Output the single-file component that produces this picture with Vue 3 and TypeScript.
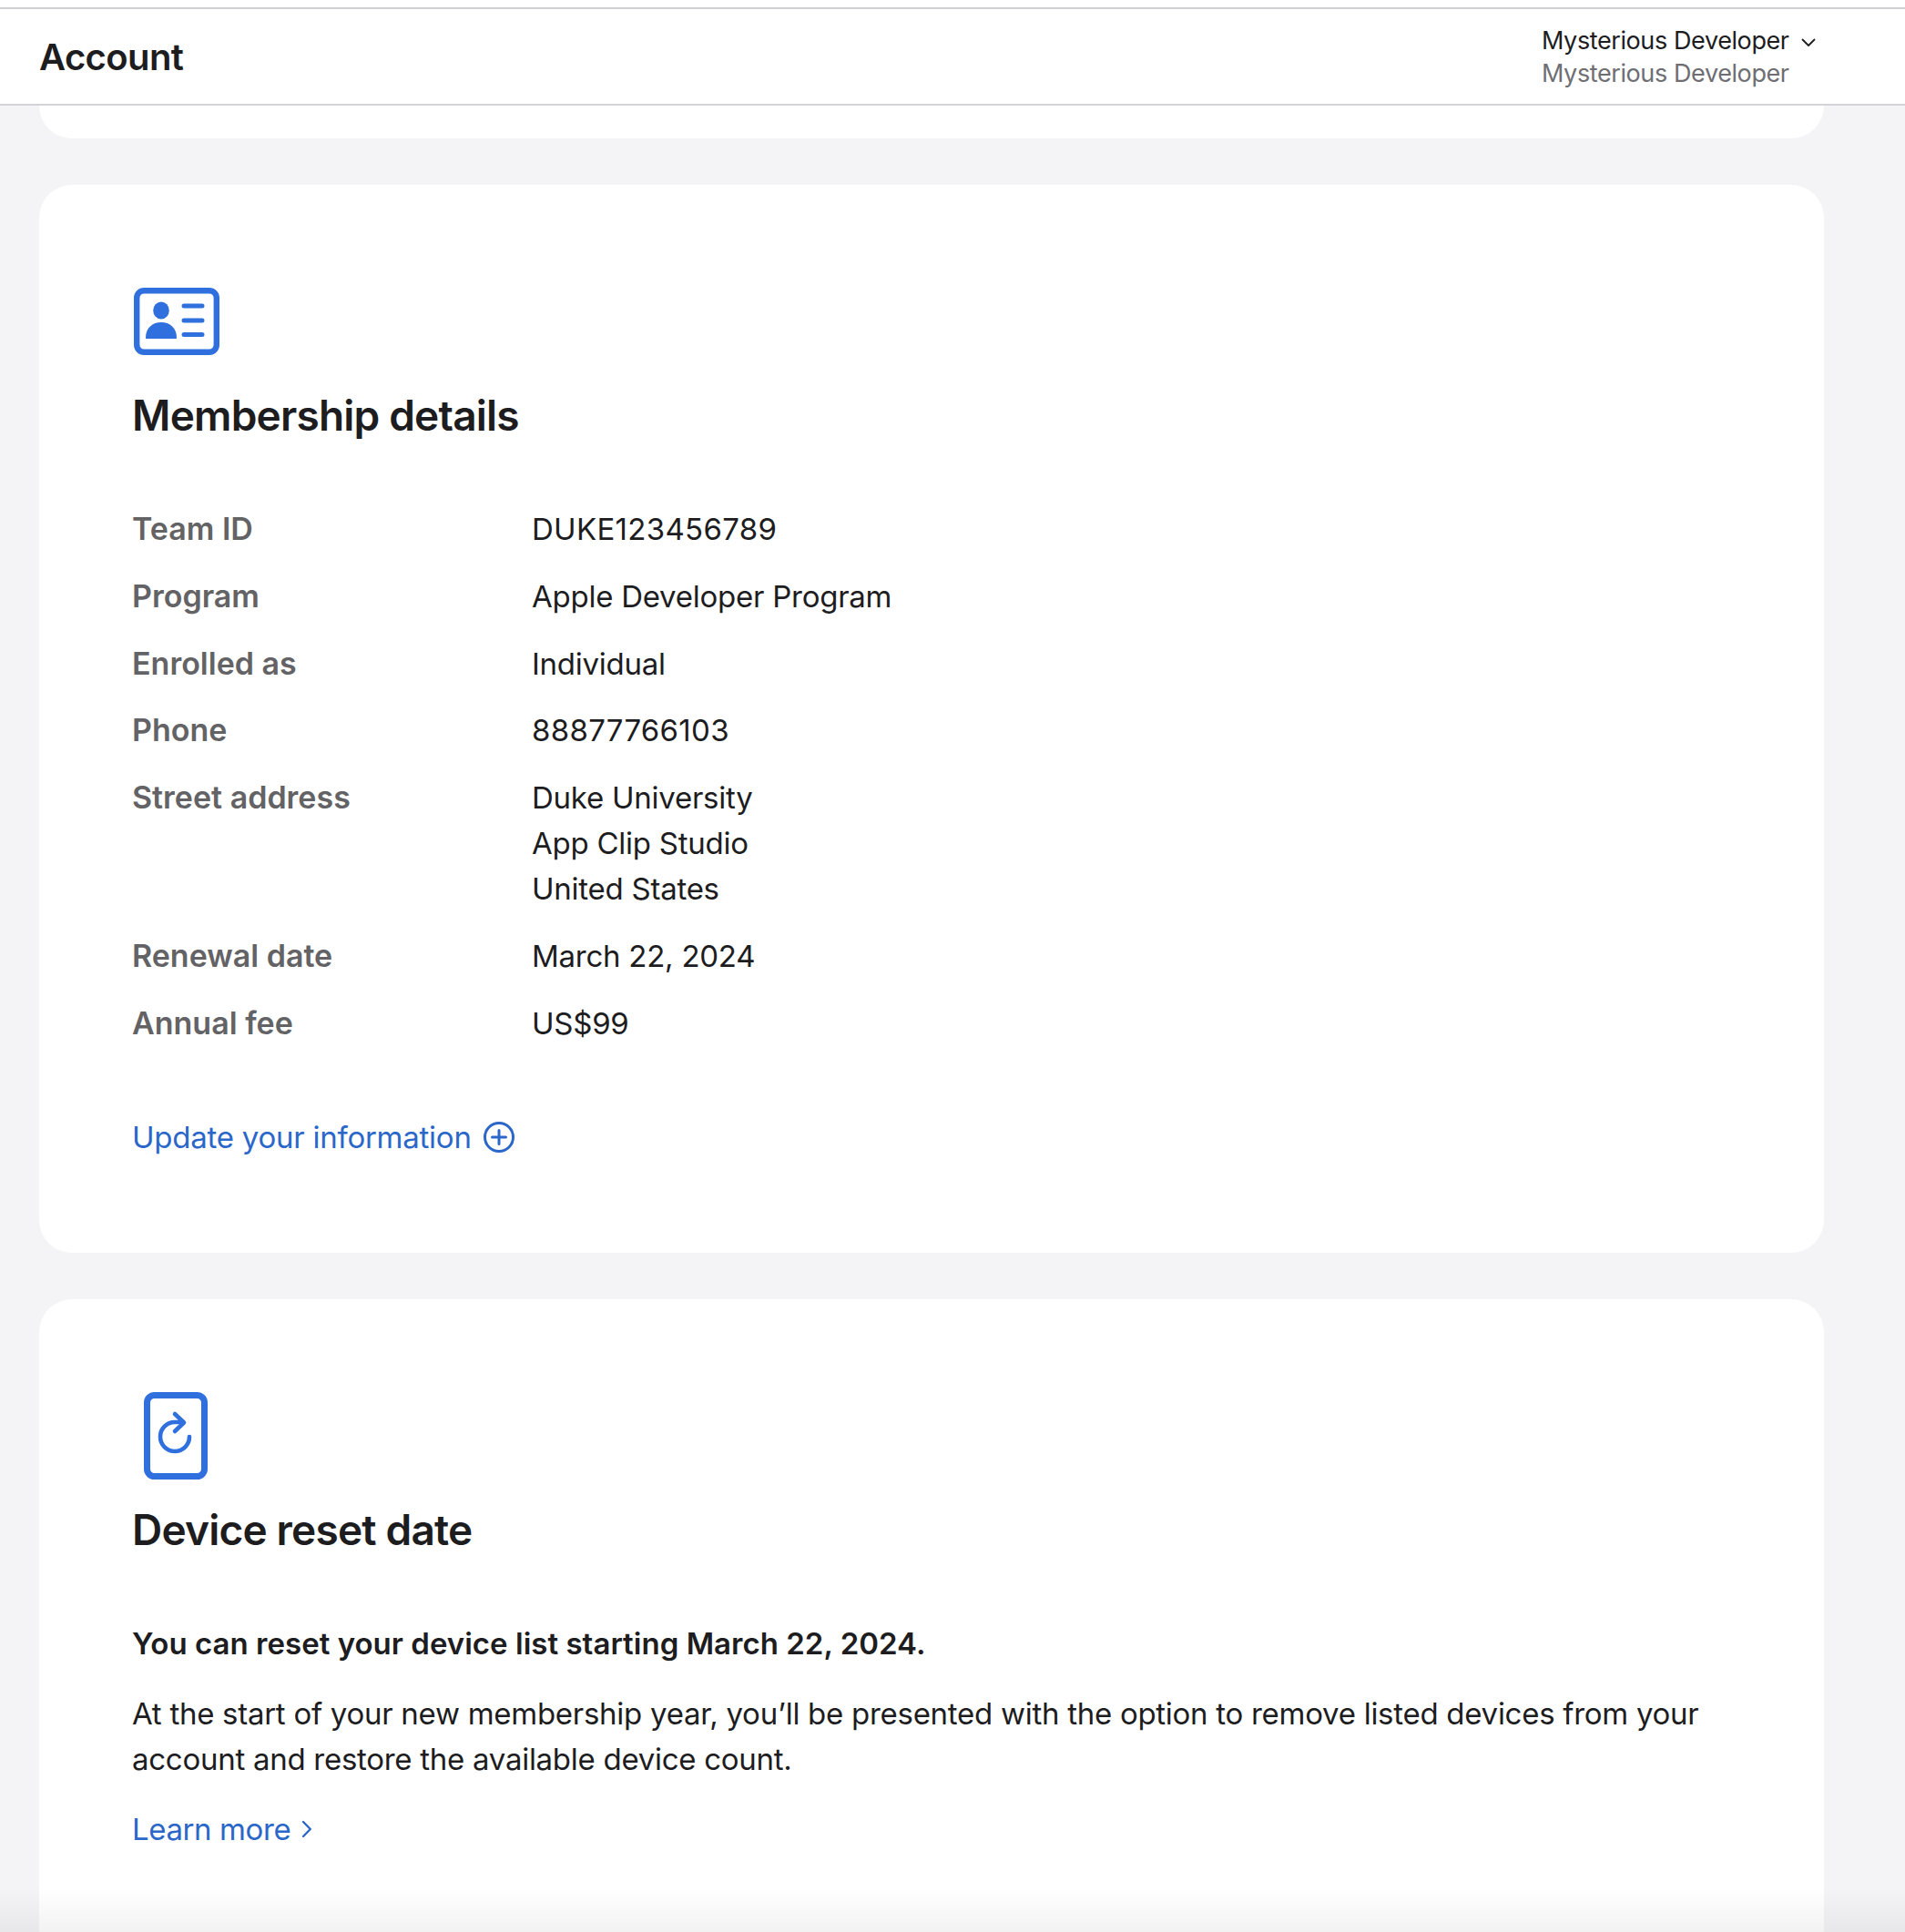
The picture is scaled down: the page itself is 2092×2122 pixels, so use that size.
<script setup lang="ts">
interface Row { label: string; lines: string[]; digits?: boolean }
const rows: Row[] = [
  { label: 'Team ID', lines: ['DUKE123456789'], digits: true },
  { label: 'Program', lines: ['Apple Developer Program'] },
  { label: 'Enrolled as', lines: ['Individual'] },
  { label: 'Phone', lines: ['88877766103'], digits: true },
  { label: 'Street address', lines: ['Duke University', 'App Clip Studio', 'United States'] },
  { label: 'Renewal date', lines: ['March 22, 2024'] },
  { label: 'Annual fee', lines: ['US$99'] },
]
</script>

<template>
  <div class="page">
    <header class="topbar">
      <h1 class="brand">Account</h1>
      <div class="account">
        <div class="acct-name">
          <span>Mysterious Developer</span>
          <svg class="chev" width="16" height="10" viewBox="0 0 16 10" fill="none"><path d="M1.500 1.500 8 8l6.500-6.500" stroke="#1d1d1f" stroke-width="1.800" stroke-linecap="round" stroke-linejoin="round"/></svg>
        </div>
        <div class="acct-sub">Mysterious Developer</div>
      </div>
    </header>

    <main class="content">
      <section class="card stub"></section>

      <section class="card">
        <svg class="icon id" width="94" height="74" viewBox="0 0 94 74" fill="none">
          <rect x="3.200" y="3.200" width="87.600" height="67.600" rx="8" stroke="#2f6fde" stroke-width="6.400"/>
          <ellipse cx="30" cy="25" rx="8.800" ry="9.400" fill="#2f6fde"/>
          <path d="M13 55c0-11 7.500-17 17-17s17 6 17 17c0 .6-.4 1-1 1H14c-.6 0-1-.4-1-1Z" fill="#2f6fde"/>
          <path d="M55 20h20M55 36h20M55 51.500h20" stroke="#2f6fde" stroke-width="5" stroke-linecap="round"/>
        </svg>
        <h2 class="title">Membership details</h2>
        <dl class="details">
          <div v-for="r in rows" :key="r.label" class="row">
            <dt>{{ r.label }}</dt>
            <dd :class="{ digits: r.digits }"><div v-for="l in r.lines" :key="l">{{ l }}</div></dd>
          </div>
        </dl>
        <a class="link update">
          <span>Update your information</span>
          <svg width="34" height="34" viewBox="0 0 34 34" fill="none"><circle cx="17" cy="17" r="15.500" stroke="#2b67c9" stroke-width="3"/><path d="M17 9.500v15M9.500 17h15" stroke="#2b67c9" stroke-width="3" stroke-linecap="round"/></svg>
        </a>
      </section>

      <section class="card last">
        <svg class="icon dev" width="70" height="96" viewBox="0 0 70 96" fill="none">
          <rect x="3.500" y="3.500" width="63" height="89" rx="8" stroke="#2f6fde" stroke-width="7"/>
          <path d="M50 49a16 16 0 1 1-16-16h8" stroke="#2f6fde" stroke-width="4.600" stroke-linecap="round"/>
          <path d="M34 24l10 9.500-10 9.500" stroke="#2f6fde" stroke-width="4.600" stroke-linecap="round" stroke-linejoin="round"/>
        </svg>
        <h2 class="title">Device reset date</h2>
        <p class="lead">You can reset your device list starting March 22, 2024.</p>
        <p class="body">At the start of your new membership year, you’ll be presented with the option to remove listed devices from your account and restore the available device count.</p>
        <a class="link more">
          <span>Learn more</span>
          <svg width="12" height="20" viewBox="0 0 12 20" fill="none"><path d="M2 2 9.800 10 2 18" stroke="#2b67c9" stroke-width="2.400" stroke-linecap="round" stroke-linejoin="round"/></svg>
        </a>
      </section>
    </main>
    <div class="fade"></div>
  </div>
</template>

<style scoped>
.page {
  position: relative;
  height: 2122px;
  overflow: hidden;
  background: #f4f4f6;
  font-family: Inter, "Liberation Sans", sans-serif;
  color: #1d1d1f;
  font-size: 33px;
  line-height: 50px;
  letter-spacing: -0.25px;
}
.topbar {
  box-sizing: border-box;
  height: 108px;
  margin-top: 8px;
  padding: 2px 88px 0 43px;
  background: #fff;
  border-top: 2px solid #d0d0d3;
  border-bottom: 2px solid #d2d2d7;
  display: flex;
  align-items: center;
  justify-content: space-between;
  box-shadow: 0 -8px 0 #fff;
}
.brand { margin: 0; font-size: 40px; font-weight: 600; line-height: 50px; letter-spacing: -0.6px; }
.account { width: 311px; font-size: 27px; line-height: 36px; letter-spacing: -0.4px; }
.acct-name { display: flex; align-items: center; gap: 13px; white-space: nowrap; }
.chev { flex-shrink: 0; margin-top: 3px; }
.acct-sub { color: #6e6e73; white-space: nowrap; }
.content {
  padding: 0 89px 0 43px;
  display: flex;
  flex-direction: column;
  gap: 51px;
}
.card {
  box-sizing: border-box;
  background: #fff;
  border-radius: 36px;
  padding: 113px 102px 0;
  height: 1173px;
}
.stub { height: 36px; padding: 0; border-radius: 0 0 36px 36px; }
.card.last { padding-top: 102px; height: 800px; }
.icon { display: block; }
.id { margin-left: 2px; }
.dev { margin-left: 13px; }
.title { margin: 0; font-size: 46px; font-weight: 600; line-height: 56px; letter-spacing: -0.8px; }
.id + .title { margin-top: 38px; }
.dev + .title { margin-top: 27px; }
.details { margin: 72px 0 0; }
.row { display: flex; margin-bottom: 23.800px; }
dt { width: 439px; font-size: 34px; font-weight: 600; color: #636366; letter-spacing: 0; }
dd { margin: 0; }
dd.digits { letter-spacing: 0.3px; }
.link { color: #2b67c9; display: inline-flex; align-items: center; }
.update { gap: 13px; margin-top: 51px; }
.lead { margin: 72px 0 0; font-weight: 600; letter-spacing: 0.02px; }
.body { margin: 27px 0 0; letter-spacing: -0.275px; }
.more { gap: 12px; margin-top: 27px; letter-spacing: -0.4px; }
.fade {
  position: absolute;
  left: 0; right: 0; bottom: 0;
  height: 48px;
  background: linear-gradient(rgba(0,0,0,0), rgba(0,0,0,.05));
}
</style>
